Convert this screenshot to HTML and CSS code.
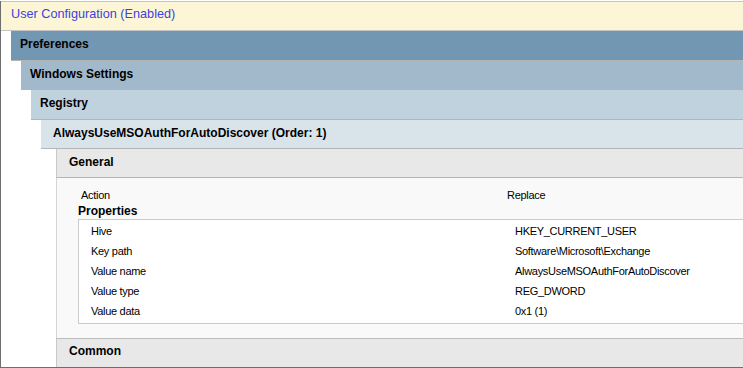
FILE: index.html
```html
<!doctype html>
<html lang="en">
<head>
    <meta charset="UTF-8">
    <title>Group Policy Report</title>
    <link rel="stylesheet" href="styles.css">
</head>
<body>
<div class="report">
    <div class="scope">User Configuration (Enabled)</div>
    <div class="level l1">
        <div class="bar">Preferences</div>
        <div class="level l2">
            <div class="bar">Windows Settings</div>
            <div class="level l3">
                <div class="bar">Registry</div>
                <div class="level l4">
                    <div class="bar">AlwaysUseMSOAuthForAutoDiscover (Order: 1)</div>
                    <div class="level l5">
                        <div class="bar">General</div>
                        <div class="details">
                            <div class="pair action">
                                <span class="key">Action</span>
                                <span>Replace</span>
                            </div>
                            <div class="caption">Properties</div>
                            <div class="props">
                                <div class="pair"><span class="key">Hive</span><span>HKEY_CURRENT_USER</span></div>
                                <div class="pair"><span class="key">Key path</span><span>Software\Microsoft\Exchange</span></div>
                                <div class="pair"><span class="key">Value name</span><span>AlwaysUseMSOAuthForAutoDiscover</span></div>
                                <div class="pair"><span class="key">Value type</span><span>REG_DWORD</span></div>
                                <div class="pair"><span class="key">Value data</span><span>0x1 (1)</span></div>
                            </div>
                        </div>
                        <div class="bar">Common</div>
                    </div>
                </div>
            </div>
        </div>
    </div>
</div>
</body>
</html>
```

FILE: styles.css
```css
* { margin: 0; padding: 0; box-sizing: border-box; }
html, body { width: 100%; height: 100%; }
body { background: #fff; overflow: hidden; font-family: "Liberation Sans", Arial, sans-serif; color: #000; }

.report { margin-top: 1px; height: 367px; border-left: 1px solid #6e6e6e; border-bottom: 1px solid #6e6e6e; }

.scope { height: 30px; line-height: 25px; padding-left: 10px; font-size: 12.7px; color: #4040e0; background: #fdf6d6; border-top: 1px solid #c4c4c4; border-bottom: 1px solid #c4c4c4; }

.level { margin-left: 10px; background: #fff; }
.level.l5 { margin-left: 15px; }

.bar { height: 29px; line-height: 26px; padding-left: 9px; font-size: 12px; font-weight: bold; border-bottom: 1px solid #b4b4b4; white-space: nowrap; }
.l1 > .bar { height: 30px; line-height: 26px; background: #7197b2; }
.l2 > .bar { background: #a2b8cb; }
.l3 > .bar { height: 30px; line-height: 26px; background: #c0d2de; }
.l4 > .bar { padding-left: 12px; background: #d9e3ea; }
.l5 > .bar { padding-left: 12px; background: #e8e8e8; border-left: 1px solid #c8c8c8; }
.l5 > .bar:last-child { border-top: 1px solid #bdbdbd; border-bottom: 0; line-height: 24px; }

.details { height: 160px; padding: 9px 0 0 21px; background: #f9f9f9; border-left: 1px solid #d4d4d4; }

.pair { display: flex; height: 20px; line-height: 20px; font-size: 11px; letter-spacing: -0.3px; white-space: nowrap; }
.pair .key { width: 426px; flex: none; }
.action { padding-left: 3px; height: 17px; line-height: 17px; }

.caption { font-size: 12px; font-weight: bold; line-height: 15px; }

.props { margin-top: 0; padding: 1px 0 2px 12px; background: #fff; border: 1px solid #cbcbcb; border-right: 0; }
.props .key { width: 424px; }
```
